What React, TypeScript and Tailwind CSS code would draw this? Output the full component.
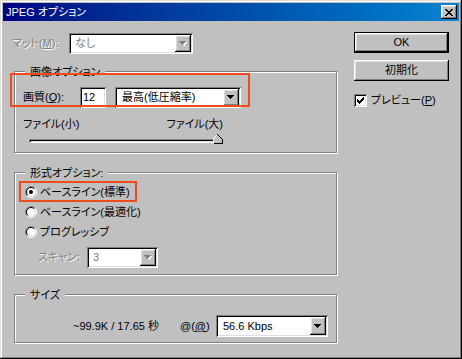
import type { ReactNode } from 'react'

const raised =
  'shadow-[inset_-1px_-1px_#000,inset_1px_1px_#fff,inset_-2px_-2px_#808080,inset_2px_2px_#dfdfdf]'
const sunken =
  'shadow-[inset_1px_1px_#808080,inset_-1px_-1px_#fff,inset_2px_2px_#000,inset_-2px_-2px_#dfdfdf]'
const dim = 'text-[#808080] [text-shadow:1px_1px_#fff]'

function Arrow({ disabled }: { disabled?: boolean }) {
  return (
    <div className={`flex h-full w-[16px] items-center justify-center bg-[#c0c0c0] ${raised}`}>
      <svg width="8" height="5" viewBox="0 0 8 5" shapeRendering="crispEdges">
        {disabled ? <path d="M2 1h6v1H2z M3 2h4v1H3z M4 3h2v1H4z M5 4h1v1H5z" fill="#fff" /> : null}
        <path
          d="M0 0h7v1H0z M1 1h5v1H1z M2 2h3v1H2z M3 3h1v1H3z"
          fill={disabled ? '#808080' : '#000'}
        />
      </svg>
    </div>
  )
}

function Combo({
  value,
  className,
  disabled,
  pad = 'pl-[4px]',
}: {
  value: string
  className: string
  disabled?: boolean
  pad?: string
}) {
  return (
    <div className={`flex items-stretch bg-white p-[2px] ${sunken} ${className}`}>
      <div className={`flex flex-1 items-center ${pad} ${disabled ? 'text-[#808080]' : 'text-black'}`}>
        {value}
      </div>
      <Arrow disabled={disabled} />
    </div>
  )
}

function Group({ title, className, children }: { title: string; className: string; children: ReactNode }) {
  return (
    <div className={`flex w-[323px] flex-col border border-[#808080] shadow-[inset_1px_1px_#fff,1px_1px_#fff] ${className}`}>
      <div className="-mt-[7px] ml-[10px] h-[14px] w-fit bg-[#c0c0c0] px-[5px] leading-[14px]">{title}</div>
      {children}
    </div>
  )
}

function Radio({ checked }: { checked?: boolean }) {
  return (
    <svg width="12" height="12" viewBox="0 0 12 12">
      <circle cx="6" cy="6" r="4.5" fill="#fff" />
      <path d="M2.1 9.9A5.5 5.5 0 0 1 9.9 2.1" stroke="#808080" fill="none" />
      <path d="M9.9 2.1A5.5 5.5 0 0 1 2.1 9.9" stroke="#fff" fill="none" />
      <path d="M2.8 9.2A4.5 4.5 0 0 1 9.2 2.8" stroke="#000" fill="none" />
      <path d="M9.2 2.8A4.5 4.5 0 0 1 2.8 9.2" stroke="#dfdfdf" fill="none" />
      {checked ? <circle cx="6" cy="6" r="2" fill="#000" /> : null}
    </svg>
  )
}

function Mark({ children, className }: { children: ReactNode; className: string }) {
  return (
    <div className="relative">
      {children}
      <div className={`pointer-events-none absolute border-2 border-[#ee4c1f] ${className}`} />
    </div>
  )
}

export default function App() {
  return (
    <div className="font-['Liberation_Sans','Noto_Sans_CJK_JP',sans-serif] text-[11px] text-black [font-feature-settings:'palt']">
      <div className="flex h-[359px] w-[462px] flex-col bg-[#c0c0c0] p-[3px] shadow-[inset_-1px_-1px_#000,inset_1px_1px_#dfdfdf,inset_-2px_-2px_#808080,inset_2px_2px_#fff]">
        {/* title bar */}
        <div className="flex h-[18px] items-center justify-between bg-gradient-to-r from-[#000080] to-[#1084d0] pl-[3px] pr-[2px]">
          <span className="text-[11px] leading-none text-white">JPEG オプション</span>
          <div className={`flex h-[14px] w-[16px] items-center justify-center bg-[#c0c0c0] ${raised}`}>
            <svg width="8" height="7" viewBox="0 0 8 7" shapeRendering="crispEdges">
              <path
                d="M0 0h2v1H0z M6 0h2v1H6z M1 1h2v1H1z M5 1h2v1H5z M2 2h4v1H2z M3 3h2v1H3z M2 4h4v1H2z M1 5h2v1H1z M5 5h2v1H5z M0 6h2v1H0z M6 6h2v1H6z"
                fill="#000"
              />
            </svg>
          </div>
        </div>

        <div className="flex">
          {/* left column */}
          <div className="ml-[11px] flex w-[323px] flex-col">
            <div className="mt-[12px] -ml-[2px] flex h-[21px] items-center">
              <span className={`w-[57px] ${dim}`}>
                マット(<span className="underline">M</span>):
              </span>
              <Combo value="なし" className="h-[21px] w-[124px]" disabled />
            </div>

            <Group title="画像オプション" className="mt-[17px] h-[82px]">
              <Mark className="-left-[5px] -top-[6px] h-[34px] w-[240px]">
                <div className="mt-[8px] flex h-[21px] items-center pl-[8px]">
                  <span className="w-[57px]">
                    画質(<span className="underline">Q</span>):
                  </span>
                  <div className={`flex h-[21px] w-[26px] items-center bg-white pl-[3px] ${sunken}`}>12</div>
                  <Combo value="最高(低圧縮率)" className="ml-[9px] h-[21px] w-[126px]" pad="pl-[5px]" />
                </div>
              </Mark>
              <div className="mt-[9px] ml-[8px] flex h-[14px] w-[200px] items-center justify-between">
                <span>ファイル(小)</span>
                <span>ファイル(大)</span>
              </div>
              <div className="relative mt-[3px] ml-[14px] flex h-[10px] w-[194px] items-end">
                <div className="mb-[1px] h-[4px] w-full border-t border-l border-t-[#808080] border-l-[#808080] border-r border-b border-r-white border-b-white shadow-[inset_1px_1px_#000,inset_-1px_-1px_#dfdfdf]" />
                <svg className="absolute right-0 bottom-0" width="10" height="10" viewBox="0 0 10 10" shapeRendering="crispEdges">
                  <path d="M0.5 9.5V4.5L4.5 0.5L9.5 5.5V9.5Z" fill="#c0c0c0" />
                  <path d="M0.5 9.5V4.5L4.5 0.5" stroke="#fff" fill="none" />
                  <path d="M4.5 0.5L9.5 5.5V9.5H0.5" stroke="#000" fill="none" />
                </svg>
              </div>
            </Group>

            <Group title="形式オプション:" className="mt-[19px] h-[103px]">
              <div className="mt-[2px] flex flex-col">
                <Mark className="left-[4px] -top-[1px] h-[21px] w-[118px]">
                  <div className="flex h-[20px] items-center gap-[3px] pl-[10px]">
                    <Radio checked />
                    <span>ベースライン(標準)</span>
                  </div>
                </Mark>
                <div className="flex h-[20px] items-center gap-[3px] pl-[10px]">
                  <Radio />
                  <span>ベースライン(最適化)</span>
                </div>
                <div className="flex h-[20px] items-center gap-[3px] pl-[10px]">
                  <Radio />
                  <span>プログレッシブ</span>
                </div>
                <div className="mt-[5px] flex h-[21px] items-center pl-[23px]">
                  <span className={`w-[49px] ${dim}`}>スキャン:</span>
                  <Combo value="3" className="h-[21px] w-[71px]" disabled />
                </div>
              </div>
            </Group>

            <Group title="サイズ" className="mt-[19px] h-[49px]">
              <div className="mt-[13px] flex h-[22px] items-center pl-[58px]">
                <span className="w-[107px]">~99.9K / 17.65 秒</span>
                <span className="w-[36px]">
                  @(<span className="underline">@</span>)
                </span>
                <Combo value="56.6 Kbps" className="h-[22px] w-[112px]" pad="pl-[5px]" />
              </div>
            </Group>
          </div>

          {/* right column */}
          <div className="ml-[17px] flex w-[95px] flex-col">
            <div className="mt-[11px] h-[21px] border border-black">
              <div className={`flex h-full items-center justify-center bg-[#c0c0c0] ${raised}`}>OK</div>
            </div>
            <div className={`mt-[7px] flex h-[21px] items-center justify-center bg-[#c0c0c0] ${raised}`}>初期化</div>
            <div className="mt-[13px] flex h-[13px] items-center gap-[4px]">
              <div className={`flex h-[13px] w-[13px] items-center justify-center bg-white ${sunken}`}>
                <svg width="7" height="7" viewBox="0 0 7 7" shapeRendering="crispEdges">
                  <path
                    d="M6 0h1v1H6z M5 1h2v1H5z M0 2h1v1H0z M4 2h3v1H4z M0 3h2v1H0z M3 3h3v1H3z M0 4h5v1H0z M1 5h3v1H1z M2 6h1v1H2z"
                    fill="#000"
                  />
                </svg>
              </div>
              <span>
                プレビュー(<span className="underline">P</span>)
              </span>
            </div>
          </div>
        </div>
      </div>
    </div>
  )
}
